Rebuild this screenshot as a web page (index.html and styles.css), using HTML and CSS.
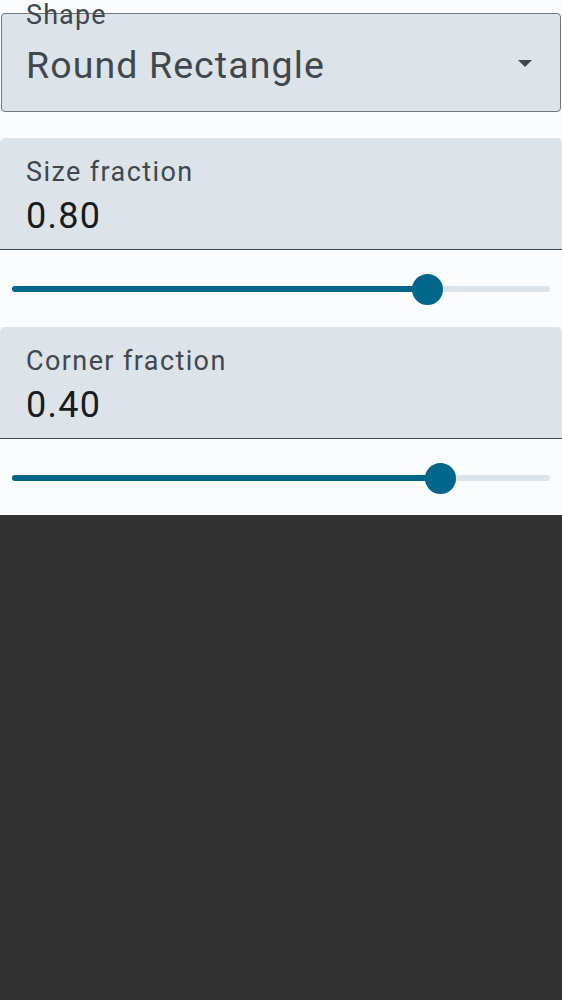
FILE: index.html
```html
<!DOCTYPE html>
<html>
<head>
<meta charset="utf-8">
<link rel="stylesheet" href="styles.css">
</head>
<body>
<div class="panel">
  <div class="dropdown">
    <span class="float-label">Shape</span>
    <span class="dd-value">Round Rectangle</span>
    <span class="dd-arrow"></span>
  </div>
  <div class="groups">
    <div class="group">
      <div class="field">
        <div class="field-label">Size fraction</div>
        <div class="field-value">0.80</div>
      </div>
      <div class="slider">
        <div class="track">
          <div class="active" style="width: 77.3%"></div>
          <div class="thumb" style="left: 77.3%"></div>
        </div>
      </div>
    </div>
    <div class="group">
      <div class="field">
        <div class="field-label">Corner fraction</div>
        <div class="field-value">0.40</div>
      </div>
      <div class="slider">
        <div class="track">
          <div class="active" style="width: 79.6%"></div>
          <div class="thumb" style="left: 79.6%"></div>
        </div>
      </div>
    </div>
  </div>
</div>
</body>
</html>
```
FILE: styles.css
```css
html, body {
  margin: 0;
  padding: 0;
}
body {
  background: #323232;
  font-family: Roboto, "Noto Sans", sans-serif;
  width: 562px;
  height: 1000px;
}
.panel {
  background: #fbfcfe;
  padding-top: 13px;
  display: flex;
  flex-direction: column;
}
.dropdown {
  position: relative;
  margin: 0 1px;
  border: 1px solid #72787e;
  border-radius: 4px;
  background: #dce3e9;
  display: flex;
  padding: 29px 28px 24px 24px;
}
.float-label {
  position: absolute;
  top: -15px;
  left: 24px;
  font-size: 27px;
  line-height: 32px;
  letter-spacing: 1.1px;
  color: #41484d;
}
.dd-value {
  flex: 1;
  font-size: 37.5px;
  line-height: 44px;
  letter-spacing: 1.1px;
  color: #41484d;
}
.dd-arrow {
  align-self: flex-start;
  margin-top: 17px;
  width: 0;
  height: 0;
  border-left: 7.5px solid transparent;
  border-right: 7.5px solid transparent;
  border-top: 7px solid #41484d;
}
.groups {
  margin-top: 26px;
  display: flex;
  flex-direction: column;
  gap: 1px;
}
.group {
  display: flex;
  flex-direction: column;
}
.field {
  background: #dce3e9;
  border-radius: 5px 5px 0 0;
  border-bottom: 1px solid #41484d;
  padding: 18px 26px 11px;
  display: flex;
  flex-direction: column;
  gap: 6px;
}
.field-label {
  font-size: 27px;
  line-height: 32px;
  letter-spacing: 1.4px;
  color: #41484d;
}
.field-value {
  font-size: 36px;
  line-height: 44px;
  letter-spacing: 1.3px;
  color: #191c1e;
}
.slider {
  height: 76px;
  padding: 36px 12px 0;
  box-sizing: border-box;
}
.track {
  position: relative;
  height: 6px;
  border-radius: 3px;
  background: #dce3e9;
}
.active {
  height: 6px;
  border-radius: 3px;
  background: #00668a;
}
.thumb {
  position: absolute;
  top: -12.5px;
  width: 31px;
  height: 31px;
  margin-left: -15.5px;
  border-radius: 50%;
  background: #00668a;
}
```
